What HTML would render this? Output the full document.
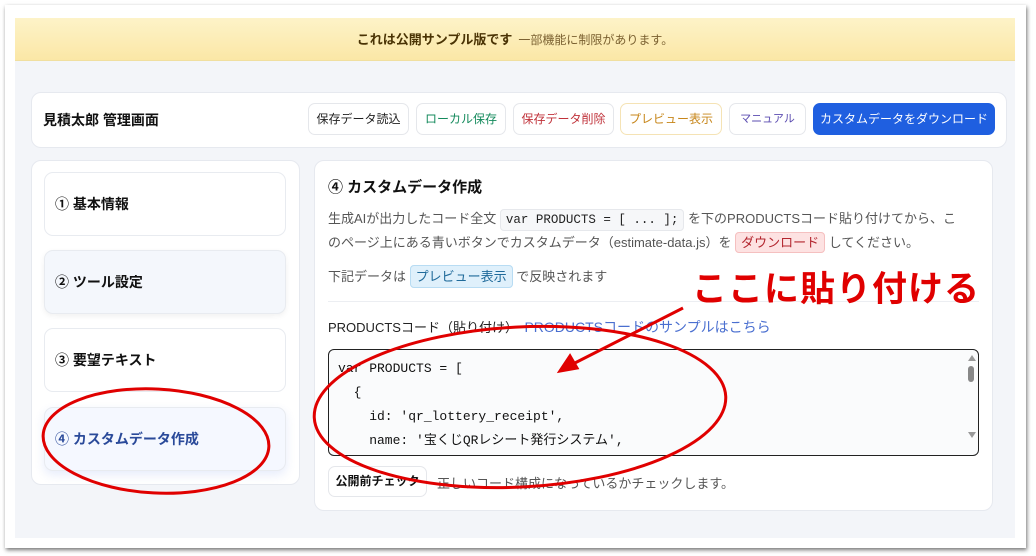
<!DOCTYPE html>
<html><head><meta charset="utf-8"><style>
*{box-sizing:border-box;margin:0;padding:0}
body{width:1036px;height:556px;background:#fff;font-family:"Liberation Sans","Noto Sans CJK JP",sans-serif;position:relative;overflow:hidden;color:#111}
.frame{position:absolute;left:5px;top:5px;width:1021px;height:543px;background:#fff;box-shadow:1px 2px 4px rgba(0,0,0,.55);}
.inner{position:absolute;left:15px;top:18px;width:1000px;height:520px;background:#f3f5f9}
.banner{position:absolute;left:15px;top:18px;width:1000px;height:43px;background:linear-gradient(#fdf3c8,#fbe7a6);border-bottom:1px solid #f0dfa0;text-align:center;font-size:13px;line-height:43px;color:#6b4a0a}
.banner b{color:#4a3304}
.banner span{color:#7a6030;font-size:12px;margin-left:6px}
.card{position:absolute;background:#fff;border:1px solid #e6e9ef;border-radius:10px}
.btn{position:absolute;top:103px;height:32px;border:1px solid #e5e7eb;border-radius:7px;background:#fff;font-size:12px;line-height:30px;text-align:center}
.item{position:absolute;left:44px;width:242px;height:64px;border:1px solid #e8ebf0;border-radius:9px;background:#fff;font-size:14px;font-weight:bold;line-height:62px;padding-left:10px}
.p{position:absolute;left:328px;font-size:13px;color:#555}
code{font-family:"Liberation Mono",monospace;font-size:12.5px;background:#f6f7f9;border:1px solid #e6e8ec;border-radius:4px;padding:3px 5px;color:#222}
.code{position:absolute;left:328px;top:349px;width:651px;height:107px;border:1.5px solid #222;border-radius:6px;background:#fafbfc;overflow:hidden;font-family:"Liberation Mono","Noto Sans CJK JP",monospace;font-size:13px;line-height:24px;padding:7px 9px;white-space:pre;color:#111}
</style></head><body>
<div class="frame"></div>
<div class="inner"></div>
<div class="banner"><b>これは公開サンプル版です</b><span>一部機能に制限があります。</span></div>
<div class="card" style="left:31px;top:92px;width:976px;height:56px"></div>
<div style="position:absolute;left:43px;top:110px;font-size:14px;font-weight:bold">見積太郎 管理画面</div>
<div class="btn" style="left:308px;width:101px;color:#222">保存データ読込</div>
<div class="btn" style="left:416px;width:90px;color:#148a5c">ローカル保存</div>
<div class="btn" style="left:513px;width:101px;color:#c0323a">保存データ削除</div>
<div class="btn" style="left:620px;width:102px;color:#c7861a;border-color:#f5e3b5">プレビュー表示</div>
<div class="btn" style="left:729px;width:77px;color:#5b4cb0;font-size:11px">マニュアル</div>
<div class="btn" style="left:813px;width:182px;background:#1f5fe0;border-color:#1f5fe0;color:#fff">カスタムデータをダウンロード</div>
<div class="card" style="left:31px;top:160px;width:269px;height:325px"></div>
<div class="item" style="top:172px">① 基本情報</div>
<div class="item" style="top:250px;background:#f4f7fc;box-shadow:0 2px 6px rgba(0,0,0,.06)">② ツール設定</div>
<div class="item" style="top:328px">③ 要望テキスト</div>
<div class="item" style="top:407px;background:#f5f8ff;color:#2a4a9a;box-shadow:0 4px 10px rgba(60,100,220,.12)">④ カスタムデータ作成</div>
<div class="card" style="left:314px;top:160px;width:679px;height:351px"></div>
<div style="position:absolute;left:328px;top:176px;font-size:15px;font-weight:bold">④ カスタムデータ作成</div>
<div class="p" style="top:208px">生成AIが出力したコード全文 <code>var PRODUCTS = [ ... ];</code> を下のPRODUCTSコード貼り付けてから、こ</div>
<div class="p" style="top:232px">のページ上にある青いボタンでカスタムデータ（estimate-data.js）を <span style="background:#fde2e2;border:1px solid #f5c0c0;border-radius:4px;padding:2px 5px;color:#b3262f">ダウンロード</span> してください。</div>
<div class="p" style="top:266px">下記データは <span style="background:#dff0fb;border:1px solid #b8dcf3;border-radius:4px;padding:3px 5px;color:#1f6a9a">プレビュー表示</span> で反映されます</div>
<div style="position:absolute;left:328px;top:301px;width:651px;height:1px;background:#eceef2"></div>
<div class="p" style="top:317px;color:#222">PRODUCTSコード（貼り付け）　<span style="color:#4a6fd0;font-size:14px">PRODUCTSコードのサンプルはこちら</span></div>
<div class="code">var PRODUCTS = [
  {
    id: 'qr_lottery_receipt',
    name: '宝くじQRレシート発行システム',
    category: 'option',</div>
<div style="position:absolute;left:968px;top:355px;width:0;height:0;border-left:4px solid transparent;border-right:4px solid transparent;border-bottom:6px solid #999"></div>
<div style="position:absolute;left:968px;top:366px;width:6px;height:16px;background:#888;border-radius:3px"></div>
<div style="position:absolute;left:968px;top:432px;width:0;height:0;border-left:4px solid transparent;border-right:4px solid transparent;border-top:6px solid #999"></div>
<div style="position:absolute;left:328px;top:466px;width:99px;height:31px;border:1px solid #e5e7eb;border-radius:7px;font-size:12px;font-weight:bold;line-height:29px;text-align:center;background:#fff">公開前チェック</div>
<div class="p" style="left:437px;top:473px">正しいコード構成になっているかチェックします。</div>
<div style="position:absolute;left:692px;top:261px;font-size:35px;font-weight:bold;color:#e00000;letter-spacing:1px;font-family:'Noto Sans CJK JP',sans-serif">ここに貼り付ける</div>
<svg width="1036" height="556" style="position:absolute;left:0;top:0" fill="none" stroke="#e00000" stroke-width="3">
<ellipse cx="156" cy="441" rx="113" ry="52" transform="rotate(3 156 441)"/>
<ellipse cx="520" cy="407" rx="206" ry="80" transform="rotate(-3 520 407)"/>
<line x1="683" y1="308" x2="565" y2="368"/>
<path d="M560 371 L570 356 L577 368 Z" fill="#e00000"/>
</svg>
</body></html>
